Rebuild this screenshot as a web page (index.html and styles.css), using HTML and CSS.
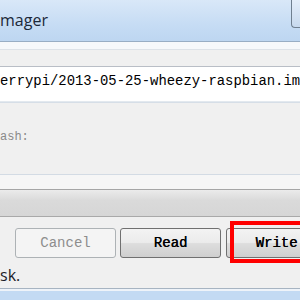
FILE: index.html
```html
<!DOCTYPE html>
<html lang="en">
<head>
    <meta charset="UTF-8">
    <title>Win32 Disk Imager</title>
    <link rel="stylesheet" href="styles.css">
</head>
<body>
    <div class="window">
        <div class="titlebar">
            <span class="title">mager</span>
            <span class="winbtn"></span>
        </div>
        <div class="menubar"></div>
        <div class="path">errypi/2013-05-25-wheezy-raspbian.im</div>
        <div class="hash">ash:</div>
        <div class="sep"></div>
        <div class="progress"></div>
        <div class="buttons">
            <button class="btn" disabled>Cancel</button>
            <button class="btn">Read</button>
            <button class="btn">Write</button>
            <span class="highlight"></span>
        </div>
        <div class="status">sk.</div>
        <div class="taskbar"></div>
    </div>
</body>
</html>
```

FILE: styles.css
```css
body {
    margin: 0;
    width: 300px;
    height: 300px;
    overflow: hidden;
    background-color: #f0f0f0;
}
.window {
    display: flex;
    flex-direction: column;
    height: 300px;
}
.window > div {
    flex-shrink: 0;
    box-sizing: border-box;
}
.titlebar {
    height: 42px;
    display: flex;
    justify-content: space-between;
    align-items: flex-start;
    background: linear-gradient(#d9e8f8, #c6dcf4 60%, #bdd6f1);
    border-bottom: 1px solid #98adc4;
}
.title {
    font-family: "Open Sans", sans-serif;
    font-size: 16px;
    color: #1b2838;
    line-height: 16px;
    margin-top: 12px;
}
.winbtn {
    width: 8px;
    height: 27px;
    border-left: 1px solid #6f7f90;
    border-bottom: 1px solid #6f7f90;
    border-bottom-left-radius: 4px;
    background: linear-gradient(#e4eefa, #c7d9ee);
}
.menubar {
    height: 25px;
    background: linear-gradient(#f6f8fb 0, #f6f8fb 7px, #dde2e8 7px, #dde2e8 8px, #f0f0f0 8px);
    border-bottom: 1px solid #b9bec6;
}
.path {
    height: 35px;
    background-color: #ffffff;
    border-bottom: 1px solid #e3e9ef;
    font-family: "Liberation Mono", monospace;
    font-size: 13.9px;
    line-height: 28px;
    color: #000000;
    white-space: nowrap;
    overflow: hidden;
}
.hash {
    height: 72px;
    border-top: 1px solid #d6dee7;
    font-family: "Liberation Mono", monospace;
    font-size: 12px;
    color: #8a8a8a;
    padding-top: 27px;
}
.sep {
    height: 15px;
    border-top: 1px solid #d3dbe4;
    background-color: #f6f6f6;
}
.progress {
    height: 28px;
    border-top: 1px solid #a6a6a6;
    border-bottom: 1px solid #a9a9a9;
    background: linear-gradient(#ebebeb, #dadada 40%, #d6d6d6);
}
.buttons {
    position: relative;
    height: 45px;
    display: flex;
    gap: 4px;
    padding: 11px 0 0 15px;
}
.btn {
    width: 101px;
    height: 30px;
    flex-shrink: 0;
    border: 1px solid #707070;
    border-radius: 3px;
    background: linear-gradient(#f3f3f3, #ebebeb 48%, #dddddd 52%, #cfcfcf);
    font-family: "Liberation Mono", monospace;
    font-size: 14px;
    color: #000000;
    text-shadow: 0.4px 0 0 #000000;
    padding: 0;
}
.btn:last-of-type {
    margin-left: 1px;
}
.btn:disabled {
    border-color: #adb2b5;
    background: #f4f4f4;
    color: #8d8d8d;
    text-shadow: none;
}
.highlight {
    position: absolute;
    left: 230px;
    top: 4px;
    width: 80px;
    height: 34px;
    border: 4px solid #ff0000;
}
.status {
    height: 26px;
    font-family: "Open Sans", sans-serif;
    font-size: 16px;
    line-height: 20px;
    color: #1c1c28;
    padding-top: 3px;
}
.taskbar {
    flex: 1;
    border-top: 1px solid #a7b4c2;
    background: linear-gradient(#eef3f9 0, #eef3f9 2px, #c3daf3 2px);
}
```
